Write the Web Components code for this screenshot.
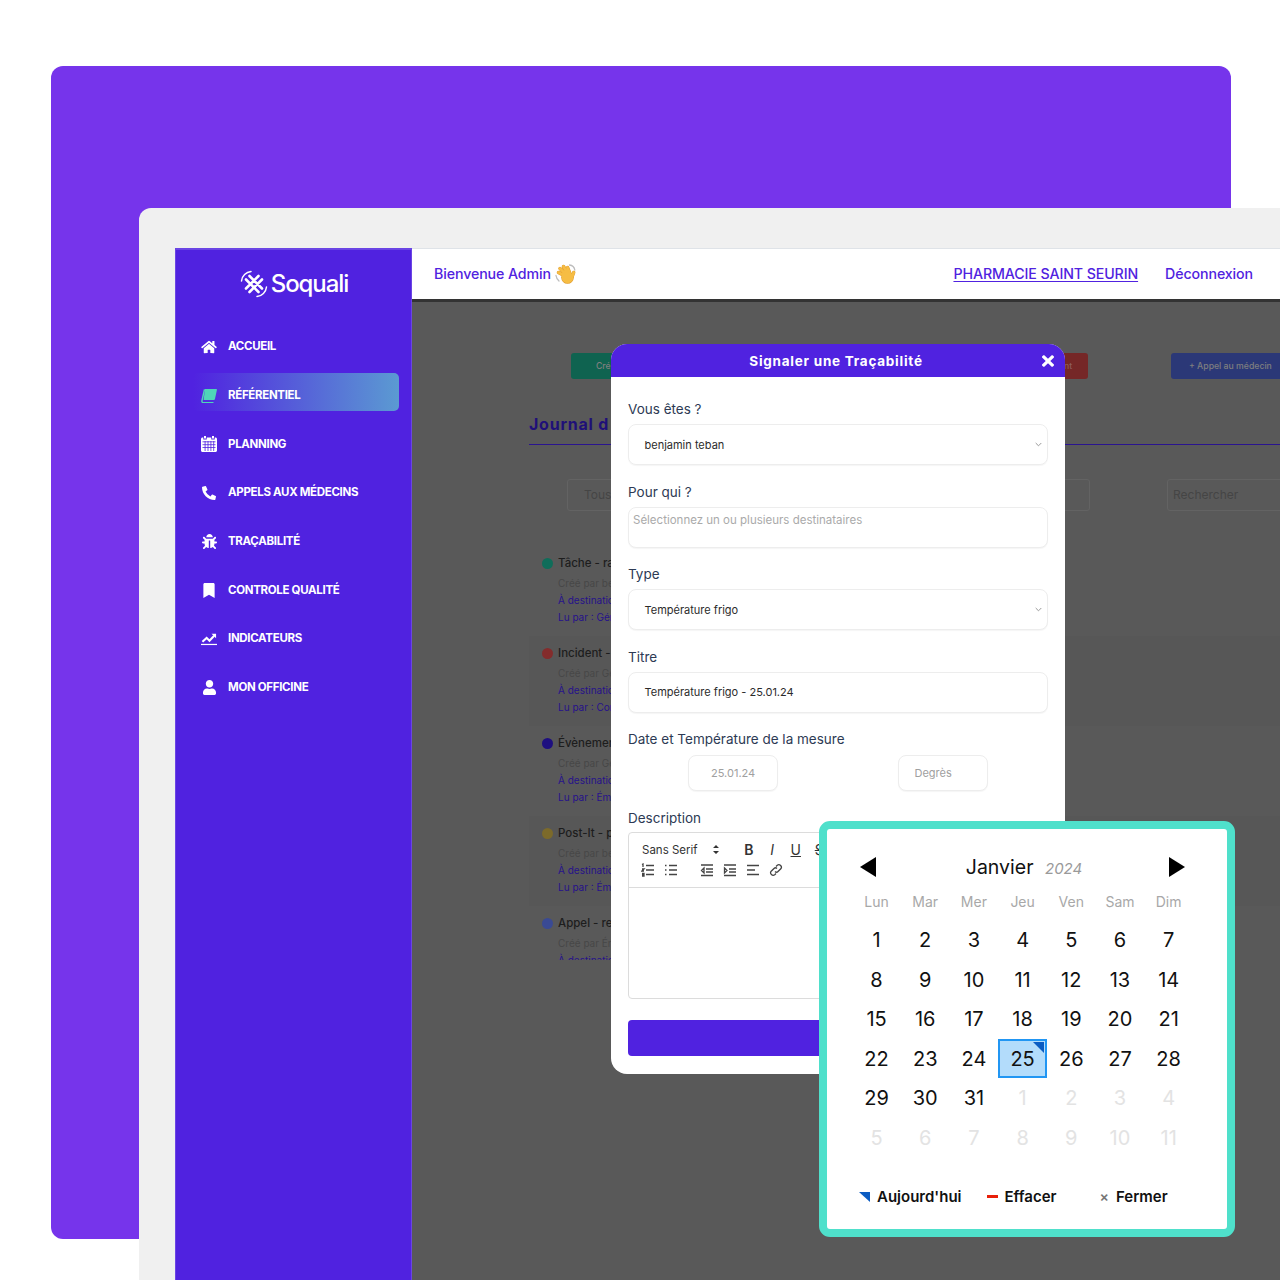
<!DOCTYPE html>
<html lang="fr">
<head>
<meta charset="utf-8">
<title>Soquali</title>
<style>
  html, body { margin: 0; padding: 0; background: #fff; }
  body { width: 1280px; height: 1280px; overflow: hidden; font-family: "Inter", "Liberation Sans", sans-serif; }
</style>
</head>
<body>
<sq-stage>
  <sq-sidebar slot="sidebar"></sq-sidebar>
  <sq-topbar slot="topbar"></sq-topbar>
  <sq-journal slot="content"></sq-journal>
  <sq-modal slot="modal"></sq-modal>
  <sq-calendar slot="popup"></sq-calendar>
</sq-stage>

<script>
const BRAND = "#5022e0";

class sqStage extends HTMLElement {
  constructor() {
    super();
    const shadowRoot = this.attachShadow({ mode: "open" });
    shadowRoot.innerHTML = `
      <style>
        :host { display: block; position: relative; width: 1280px; height: 1280px; overflow: hidden; }
        .backdrop { box-sizing: border-box; width: 1280px; height: 1280px; padding: 66px 49px 41px 51px; }
        .panel { height: 100%; background: #7634eb; border-radius: 12px; }
        .window {
          position: absolute; left: 139px; top: 208px; right: 0; bottom: 0;
          box-sizing: border-box; padding: 40px 0 0 36px;
          background: #f0f0f0; border-top-left-radius: 12px; display: flex;
        }
        .main { flex: 1; min-width: 0; display: flex; flex-direction: column; }
        .body { flex: 1; min-height: 0; overflow: hidden; background: #595959; }
      </style>
      <div class="backdrop"><div class="panel"></div></div>
      <div class="window">
        <slot name="sidebar"></slot>
        <div class="main">
          <slot name="topbar"></slot>
          <div class="body"><slot name="content"></slot></div>
        </div>
      </div>
      <slot name="modal"></slot>
      <slot name="popup"></slot>
    `;
  }
}

class sqNavItem extends HTMLElement {
  constructor() {
    super();
    const shadowRoot = this.attachShadow({ mode: "open" });
    shadowRoot.innerHTML = `
      <style>
        :host { display: flex; align-items: center; box-sizing: border-box; height: 38px; margin: 0 12px 10.7px 17px; padding-left: 8px; border-radius: 5px;
          color: #fff; font: 700 11.500px/1 "Inter", "Liberation Sans", sans-serif; letter-spacing: -0.32px; }
        :host([active]) { margin-top: -4px; margin-bottom: 14.700px; padding-top: 8px; background: linear-gradient(90deg, #5022e0 0%, #5b9ad2 100%); }
        .ic { width: 16px; height: 16px; display: flex; align-items: center; justify-content: center; margin-right: 11px; }
        ::slotted(svg) { display: block; }
      </style>
      <span class="ic"><slot name="icon"></slot></span>
      <slot></slot>
    `;
  }
}

class sqSidebar extends HTMLElement {
  constructor() {
    super();
    const shadowRoot = this.attachShadow({ mode: "open" });
    const ic = (vb, w, h, d, fill = "#fff") => `<svg slot="icon" viewBox="${vb}" width="${w}" height="${h}" fill="${fill}"><path d="${d}"/></svg>`;
    shadowRoot.innerHTML = `
      <style>
        :host { display: block; box-sizing: border-box; width: 237px; background: ${BRAND}; border-top: 2px solid #6a45e4; border-left: 1px solid #6a45e4; border-right: 1px solid #6a45e4; }
        .logo { display: flex; align-items: center; justify-content: center; gap: 3px; height: 68px; margin: 0 0 10px 1px; color: #fff;
          font: 500 24px/1 "Inter", "Liberation Sans", sans-serif; letter-spacing: -1.050px; }
        nav { display: block; }
      </style>
      <div class="logo">
        <svg width="28" height="28" viewBox="0 0 28 28" fill="none" stroke="#fff" stroke-linecap="round">
          <path d="M1.500 11C2 6 6 2 11 1.500" stroke-width="1.500"/>
          <path d="M26.500 17C26 22 22 26 17 26.500" stroke-width="1.500"/>
          <path d="M9.500 6 22 18.500M6 9.500 18.500 22M18.500 6 6 18.500M22 9.500 9.500 22" stroke-width="2.600"/>
        </svg>
        <span>Soquali</span>
      </div>
      <nav>
        <sq-nav-item>${ic("0 0 576 512", 16, 14, "M280.37 148.26L96 300.11V464a16 16 0 0 0 16 16l112.06-.29a16 16 0 0 0 15.92-16V368a16 16 0 0 1 16-16h64a16 16 0 0 1 16 16v95.64a16 16 0 0 0 16 16.05L464 480a16 16 0 0 0 16-16V300L295.67 148.26a12.19 12.19 0 0 0-15.3 0zM571.6 251.47L488 182.56V44.05a12 12 0 0 0-12-12h-56a12 12 0 0 0-12 12v72.61L318.47 43a48 48 0 0 0-61 0L4.34 251.47a12 12 0 0 0-1.6 16.9l25.5 31A12 12 0 0 0 45.15 301l235.22-193.74a12.19 12.19 0 0 1 15.3 0L530.9 301a12 12 0 0 0 16.9-1.6l25.5-31a12 12 0 0 0-1.7-16.93z")}ACCUEIL</sq-nav-item>
        <sq-nav-item active>
          <svg slot="icon" viewBox="0 0 16 14" width="16" height="14"><path d="M4 0H15.200C15.700 0 16 .4 15.900.9L13.900 10.200C13.800 10.700 13.400 11 12.900 11H2.600z" fill="#4fd6b8"/><path d="M3.500.4 1 11.500C.7 13 1.200 13.600 2.500 13.600H12.500" fill="none" stroke="#4fd6b8" stroke-width="1.400"/></svg>
          RÉFÉRENTIEL
        </sq-nav-item>
        <sq-nav-item>
          <svg slot="icon" viewBox="0 0 16 16" width="16" height="16" fill="#fff"><path d="M3 0h2v2.500H3zM11 0h2v2.500h-2zM1.500 1.500H2.300V3.500h3.400V1.500h4.600V3.500h3.400V1.500H14.500C15.300 1.500 16 2.200 16 3V14.500C16 15.300 15.300 16 14.500 16H1.500C.7 16 0 15.300 0 14.500V3C0 2.200.7 1.500 1.500 1.500z"/><path d="M1.500 5.800H14.500M1.500 8.700H14.500M1.500 11.500H14.500M4.100 5V15M7 5V15M9.900 5V15M12.700 5V15" stroke="${BRAND}" stroke-width=".8"/></svg>
          PLANNING
        </sq-nav-item>
        <sq-nav-item>${ic("0 0 512 512", 14, 14, "M497.39 361.8l-112-48a24 24 0 0 0-28 6.9l-49.6 60.6A370.66 370.66 0 0 1 130.6 204.11l60.6-49.6a23.94 23.94 0 0 0 6.9-28l-48-112A24.16 24.16 0 0 0 122.6.61l-104 24A24 24 0 0 0 0 48c0 256.5 207.9 464 464 464a24 24 0 0 0 23.4-18.6l24-104a24.29 24.29 0 0 0-14.01-27.6z")}APPELS AUX MÉDECINS</sq-nav-item>
        <sq-nav-item>${ic("0 0 512 512", 15, 15, "M511.988 288.9c-.478 17.43-15.217 31.1-32.653 31.1H424v16c0 21.864-4.882 42.584-13.6 61.145l60.228 60.228c12.496 12.497 12.496 32.758 0 45.255-12.498 12.497-32.759 12.496-45.256 0l-54.736-54.736C345.886 467.965 314.351 480 280 480V236c0-6.627-5.373-12-12-12h-24c-6.627 0-12 5.373-12 12v244c-34.351 0-65.886-12.035-90.636-32.108l-54.736 54.736c-12.498 12.497-32.759 12.496-45.256 0-12.496-12.497-12.496-32.758 0-45.255l60.228-60.228C92.882 378.584 88 357.864 88 336v-16H32.666C15.23 320 .491 306.33.013 288.9-.484 270.816 14.028 256 32 256h56v-58.745l-46.628-46.628c-12.496-12.497-12.496-32.758 0-45.255 12.498-12.497 32.758-12.497 45.256 0L141.255 160h229.489l54.627-54.627c12.498-12.497 32.758-12.497 45.256 0 12.496 12.497 12.496 32.758 0 45.255L424 197.255V256h56c17.972 0 32.484 14.816 31.988 32.9zM257 0c-61.856 0-112 50.144-112 112h224C369 50.144 318.856 0 257 0z")}TRAÇABILITÉ</sq-nav-item>
        <sq-nav-item>${ic("0 0 384 512", 12, 15, "M0 512V48C0 21.49 21.49 0 48 0h288c26.51 0 48 21.49 48 48v464L192 400 0 512z")}CONTROLE QUALITÉ</sq-nav-item>
        <sq-nav-item>
          <svg slot="icon" viewBox="0 0 17 14" width="17" height="14" fill="none" stroke="#fff"><path d="M0 12.800H17" stroke-width="1.300"/><path d="M1.500 10 6 5.800l3 3L14 3.500" stroke-width="2.200"/><path d="M11.200 1.500H16V6.300z" fill="#fff" stroke="none"/></svg>
          INDICATEURS
        </sq-nav-item>
        <sq-nav-item>${ic("0 0 448 512", 13, 15, "M224 256c70.7 0 128-57.3 128-128S294.7 0 224 0 96 57.3 96 128s57.3 128 128 128zm89.6 32h-16.7c-22.2 10.2-46.9 16-72.9 16s-50.6-5.8-72.9-16h-16.7C60.2 288 0 348.2 0 422.4V464c0 26.5 21.5 48 48 48h352c26.5 0 48-21.5 48-48v-41.6c0-74.2-60.2-134.4-134.4-134.4z")}MON OFFICINE</sq-nav-item>
      </nav>
    `;
  }
}

class sqTopbar extends HTMLElement {
  constructor() {
    super();
    const shadowRoot = this.attachShadow({ mode: "open" });
    const fingers = "M9 11.500 3.500 8.500M10 9.500 5 4.500M12 8.500 8.500 2.500M14.500 8.500 12.500 3.500M17 13 18.700 8.500";
    shadowRoot.innerHTML = `
      <style>
        :host { display: flex; align-items: center; box-sizing: border-box; height: 54px; flex: none; padding: 0 27px 0 22px; background: #fff;
          border-top: 1px solid #dfe3e8; border-bottom: 3px solid #333; color: ${BRAND};
          font: 500 14.200px/1 "Inter", "Liberation Sans", sans-serif; letter-spacing: -0.1px; }
        .hi { display: flex; align-items: center; gap: 4px; }
        .right { margin-left: auto; display: flex; gap: 27px; }
        u { text-underline-offset: 2px; }
      </style>
      <div class="hi">
        <span>Bienvenue Admin</span>
        <svg width="21" height="21" viewBox="0 0 21 21" fill="none" stroke-linecap="round">
          <path d="M14.500 1C17.500 1.300 19.300 3 19.800 6M1 11.500C1.300 14 2.300 15.500 4 17" stroke="#bdbdbd" stroke-width="1.300"/>
          <path d="${fingers}" stroke="#df9a2b" stroke-width="3.500"/>
          <circle cx="12.500" cy="13.500" r="6.300" fill="#df9a2b"/>
          <path d="${fingers}" stroke="#f6bd44" stroke-width="2.700"/>
          <circle cx="12.500" cy="13.500" r="5.800" fill="#f6bd44"/>
        </svg>
      </div>
      <div class="right">
        <u>PHARMACIE SAINT SEURIN</u>
        <span>Déconnexion</span>
      </div>
    `;
  }
}

class sqEntry extends HTMLElement {
  constructor() {
    super();
    const shadowRoot = this.attachShadow({ mode: "open" });
    const color = this.getAttribute("color");
    const read = this.getAttribute("read");
    shadowRoot.innerHTML = `
      <style>
        :host { display: block; box-sizing: border-box; height: 90px; padding: 7px 0 0 13px; font: 400 10px/17px "Inter", "Liberation Sans", sans-serif; color: #474747; white-space: nowrap; }
        :host([shaded]) { background: #575757; }
        .t { display: flex; align-items: center; gap: 5px; height: 20px; margin-bottom: 2px; font-size: 11.500px; font-weight: 500; color: #1d1d1d; }
        .dot { width: 11px; height: 11px; border-radius: 50%; background: ${color}; }
        .b { color: #26128a; padding-left: 16px; }
        .g { padding-left: 16px; }
      </style>
      <div class="t"><span class="dot"></span><span>${this.getAttribute("label")}</span></div>
      <div class="g">${this.getAttribute("by")}</div>
      <div class="b">À destinatio</div>
      ${read ? `<div class="b">${read}</div>` : ""}
    `;
  }
}

class sqJournal extends HTMLElement {
  constructor() {
    super();
    const shadowRoot = this.attachShadow({ mode: "open" });
    shadowRoot.innerHTML = `
      <style>
        :host { display: block; box-sizing: border-box; height: 100%; padding: 51px 0 0 117px; font-family: "Inter", "Liberation Sans", sans-serif; }
        .actions { display: flex; margin-left: 42px; }
        .btn { box-sizing: border-box; flex: none; height: 26px; border-radius: 3px; font-size: 8.700px; font-weight: 500; line-height: 26px; white-space: nowrap; color: #7f7f7f; }
        .green { width: 60px; background: #0f6350; padding-left: 25px; }
        .red { width: 50px; margin-left: 407px; background: #752727; padding-left: 26px; color: #8d5d5d; }
        .blue { width: 125px; margin-left: 83px; background: #2b3877; padding-left: 18px; }
        h2 { margin: 34px 0 0; padding-bottom: 8px; height: 23px; border-bottom: 1px solid #2a1490; font-size: 16px; line-height: 23px; font-weight: 700; letter-spacing: .75px; color: #1f1078; }
        .filters { display: flex; margin: 34px 0 0 38px; }
        .f { box-sizing: border-box; flex: none; height: 32px; border: 1px solid #636363; border-radius: 3px; font-size: 12px; line-height: 30px; color: #454545; padding-left: 16px; }
        .tous { width: 70px; }
        .mid { width: 40px; margin-left: 413px; }
        .search { width: 130px; margin-left: 77px; padding-left: 5px; }
        .list { height: 414px; overflow: hidden; margin-top: 35px; }
      </style>
      <div class="actions">
        <div class="btn green">Cré</div>
        <div class="btn red">nt</div>
        <div class="btn blue">+ Appel au médecin</div>
      </div>
      <h2>Journal d</h2>
      <div class="filters">
        <div class="f tous">Tous</div>
        <div class="f mid"></div>
        <div class="f search">Rechercher</div>
      </div>
      <div class="list">
        <sq-entry color="#0f6d5a" label="Tâche - ra" by="Créé par be" read="Lu par : Gér"></sq-entry>
        <sq-entry shaded color="#842c2c" label="Incident -" by="Créé par Ge" read="Lu par : Cor"></sq-entry>
        <sq-entry color="#1e0f80" label="Évènemen" by="Créé par Ge" read="Lu par : Émi"></sq-entry>
        <sq-entry shaded color="#7c6a2a" label="Post-It - p" by="Créé par be" read="Lu par : Émi"></sq-entry>
        <sq-entry color="#3a4a94" label="Appel - re" by="Créé par Én"></sq-entry>
      </div>
    `;
  }
}

class sqField extends HTMLElement {
  constructor() {
    super();
    const shadowRoot = this.attachShadow({ mode: "open" });
    shadowRoot.innerHTML = `
      <style>
        :host { display: block; margin-bottom: 13.500px; }
        label { display: block; height: 28px; line-height: 26px; font-size: 13.500px; color: #2d3a54; }
      </style>
      <label>${this.getAttribute("label")}</label>
      <slot></slot>
    `;
  }
}

class sqInput extends HTMLElement {
  constructor() {
    super();
    const shadowRoot = this.attachShadow({ mode: "open" });
    const chevron = this.hasAttribute("select")
      ? `<svg width="7" height="5" viewBox="0 0 7 5" fill="none" stroke="#999" stroke-width="1"><path d="M.7 1 3.500 3.800 6.300 1"/></svg>` : "";
    shadowRoot.innerHTML = `
      <style>
        :host { display: flex; align-items: center; justify-content: space-between; box-sizing: border-box; height: 41px; padding: 0 5px 0 15.500px;
          border: 1px solid #ededed; border-radius: 8px; background: #fff; font-size: 11px; color: #2b2b2b; box-shadow: 0 1px 1px rgba(0,0,0,.04); }
        :host([placeholder]) { align-items: flex-start; padding: 5px 4px; color: #aaa; font-size: 11.500px; }
      </style>
      <slot></slot>${chevron}
    `;
  }
}

class sqEditor extends HTMLElement {
  constructor() {
    super();
    const shadowRoot = this.attachShadow({ mode: "open" });
    const lines = (d, cls = "") => `<svg class="${cls}" width="14" height="14" viewBox="0 0 14 14" fill="none" stroke="#444" stroke-width="1.300"><path d="${d}"/></svg>`;
    shadowRoot.innerHTML = `
      <style>
        :host { display: block; box-sizing: border-box; height: 167px; margin-top: -1px; border: 1px solid #dcdcdc; border-radius: 4px; color: #333; }
        .toolbar { box-sizing: border-box; height: 55px; padding: 7px 0 0 13px; border-bottom: 1px solid #dcdcdc; }
        .row { display: flex; align-items: center; height: 20px; }
        .font { font-size: 11.500px; width: 71px; }
        .ud { width: 24px; }
        .g { width: 23.500px; text-align: center; font: 500 14px/1 "Inter", sans-serif; }
        .b { font-weight: 600; }
        .i { font-style: italic; font-weight: 400; }
        .u { font-weight: 400; text-decoration: underline; }
        .s { font-weight: 400; text-decoration: line-through; }
        .row svg { flex: none; margin-right: 9px; }
        .row svg.gap { margin-right: 22px; }
      </style>
      <div class="toolbar">
        <div class="row">
          <span class="font">Sans Serif</span>
          <span class="ud"><svg width="6" height="9" viewBox="0 0 6 9" fill="#333" style="display:block;margin:0"><path d="M3 0 6 3H0zM3 9 0 6h6z"/></svg></span>
          <span class="g b">B</span><span class="g i">I</span><span class="g u">U</span><span class="g s">S</span>
        </div>
        <div class="row" style="margin-left:-1px">
          ${lines("M5 2.500H13M5 7H13M5 11.500H13M1 1.500 2 1V4M1 6H3L1 8H3M1 10.500H3V13H1M1 11.800H3")}
          ${lines("M5 2.500H13M5 7H13M5 11.500H13M1 2.500H2.500M1 7H2.500M1 11.500H2.500", "gap")}
          ${lines("M1 2H13M6 6H13M6 9H13M1 12.500H13M4 5 1.500 7.500 4 10z")}
          ${lines("M1 2H13M6 6H13M6 9H13M1 12.500H13M1.500 5 4 7.500 1.500 10z")}
          ${lines("M1 2.500H13M1 7H9M1 11.500H13")}
          ${lines("M6 8.500C7 9.500 8 9.500 9 8.500L11.800 5.800C13.700 3.500 10.500.5 8.300 2.300L7 3.500M8 5.500C7 4.500 6 4.500 5 5.500L2.200 8.200C.3 10.500 3.500 13.500 5.700 11.700L7 10.500")}
        </div>
      </div>
    `;
  }
}

class sqModal extends HTMLElement {
  constructor() {
    super();
    const shadowRoot = this.attachShadow({ mode: "open" });
    shadowRoot.innerHTML = `
      <style>
        :host { display: block; position: absolute; left: 611px; top: 344px; width: 454px; height: 730px; background: #fff; border-radius: 16px; overflow: hidden; font-family: "Inter", "Liberation Sans", sans-serif; }
        header { position: relative; height: 33px; background: ${BRAND}; color: #fff; font-size: 13.500px; font-weight: 700; letter-spacing: .75px; line-height: 34px; text-align: center; padding-right: 4px; }
        header svg { position: absolute; right: 11px; top: 11px; }
        .body { padding: 19px 17px 0 17px; }
        .dates { display: grid; grid-template-columns: 1fr 1fr; justify-items: center; margin-top: 1px; }
        .dates sq-input { width: 90px; height: 36px; justify-content: flex-start; color: #a0a0a0; }
        .submit { height: 36px; margin-top: 21px; background: ${BRAND}; border-radius: 4px; }
      </style>
      <header>Signaler une Traçabilité
        <svg width="12" height="12" viewBox="0 72 352 368" fill="#fff" preserveAspectRatio="none"><path d="M242.72 256l100.07-100.07c12.28-12.28 12.28-32.19 0-44.48l-22.24-22.24c-12.28-12.28-32.19-12.28-44.48 0L176 189.28 75.930 89.210c-12.28-12.28-32.19-12.28-44.48 0L9.210 111.45c-12.28 12.28-12.28 32.19 0 44.48L109.28 256 9.210 356.07c-12.28 12.28-12.28 32.19 0 44.48l22.24 22.24c12.28 12.28 32.2 12.28 44.48 0L176 322.72l100.07 100.07c12.28 12.28 32.2 12.28 44.48 0l22.24-22.24c12.28-12.28 12.28-32.19 0-44.48L242.72 256z"/></svg>
      </header>
      <div class="body">
        <sq-field label="Vous êtes ?"><sq-input select>benjamin teban</sq-input></sq-field>
        <sq-field label="Pour qui ?"><sq-input placeholder>Sélectionnez un ou plusieurs destinataires</sq-input></sq-field>
        <sq-field label="Type"><sq-input select>Température frigo</sq-input></sq-field>
        <sq-field label="Titre"><sq-input>Température frigo - 25.01.24</sq-input></sq-field>
        <sq-field label="Date et Température de la mesure">
          <div class="dates"><sq-input style="padding-left:22px">25.01.24</sq-input><sq-input>Degrès</sq-input></div>
        </sq-field>
        <sq-field label="Description"><sq-editor></sq-editor><div class="submit"></div></sq-field>
      </div>
    `;
  }
}

class sqCalendar extends HTMLElement {
  constructor() {
    super();
    const shadowRoot = this.attachShadow({ mode: "open" });
    const days = ["Lun", "Mar", "Mer", "Jeu", "Ven", "Sam", "Dim"].map(d => `<div class="wd">${d}</div>`).join("");
    let cells = "";
    for (let i = 1; i <= 31; i++) cells += `<div class="d${i === 25 ? " today" : ""}">${i}</div>`;
    for (let i = 1; i <= 11; i++) cells += `<div class="d off">${i}</div>`;
    shadowRoot.innerHTML = `
      <style>
        :host { display: block; position: absolute; left: 819px; top: 821px; box-sizing: border-box; width: 416px; height: 416px; background: #fff; border: 8px solid #4fe0cb; border-radius: 11px; font-family: "Inter", "Liberation Sans", sans-serif; color: #111; }
        .head { display: flex; align-items: center; justify-content: space-between; height: 30px; margin: 23px 42px 0 33px; }
        .title { font-size: 19.500px; font-weight: 400; margin-left: 3px; }
        .title i { font-size: 15px; color: #9a9a9a; margin-left: 6px; }
        .tri { width: 0; height: 0; border-top: 10px solid transparent; border-bottom: 10px solid transparent; }
        .prev { border-right: 16px solid #000; }
        .next { border-left: 16px solid #000; }
        .grid { display: grid; grid-template-columns: repeat(7, 48.700px); margin-left: 25.200px; }
        .wd { height: 38px; line-height: 40px; text-align: center; font-size: 14px; color: #a8a8a8; }
        .d { position: relative; height: 39.600px; line-height: 40px; text-align: center; font-size: 20px; }
        .off { color: #e3e3e3; }
        .today { background: #b3dcfb; box-shadow: inset 0 0 0 2px #2196f3; }
        .today::after { content: ""; position: absolute; right: 3px; top: 3px; border-top: 11px solid #0b5cc2; border-left: 11px solid transparent; }
        .foot { display: flex; align-items: center; margin: 29px 0 0 32px; height: 20px; font-size: 15px; font-weight: 600; }
        .foot span { display: block; }
        .t { border-top: 10px solid #0b5cc2; border-left: 11px solid transparent; margin-right: 7px; }
        .dash { width: 11px; height: 3px; background: #e8200a; margin: 0 7px 0 25px; }
        .x { color: #777; font-size: 14px; margin: 0 7px 0 43px; font-weight: 600; }
      </style>
      <div class="head">
        <div class="tri prev"></div>
        <div class="title">Janvier <i>2024</i></div>
        <div class="tri next"></div>
      </div>
      <div class="grid">${days}${cells}</div>
      <div class="foot">
        <span class="t"></span><span>Aujourd'hui</span>
        <span class="dash"></span><span>Effacer</span>
        <span class="x">×</span><span>Fermer</span>
      </div>
    `;
  }
}

customElements.define("sq-stage", sqStage);
customElements.define("sq-nav-item", sqNavItem);
customElements.define("sq-sidebar", sqSidebar);
customElements.define("sq-topbar", sqTopbar);
customElements.define("sq-entry", sqEntry);
customElements.define("sq-journal", sqJournal);
customElements.define("sq-field", sqField);
customElements.define("sq-input", sqInput);
customElements.define("sq-editor", sqEditor);
customElements.define("sq-modal", sqModal);
customElements.define("sq-calendar", sqCalendar);
</script>
</body>
</html>
